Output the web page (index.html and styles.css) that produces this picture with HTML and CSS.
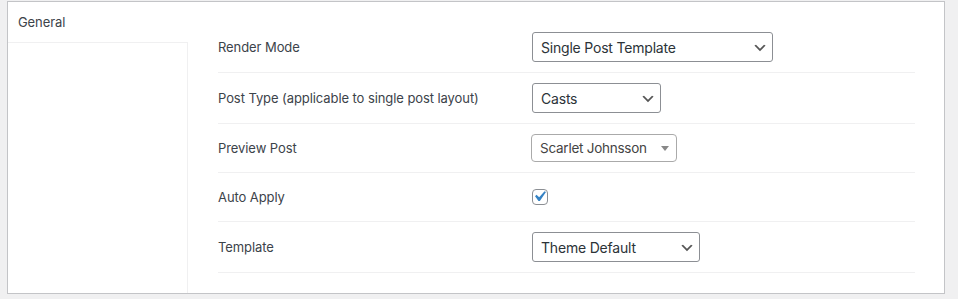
FILE: index.html
```html
<!DOCTYPE html>
<html lang="en">
<head>
    <meta charset="UTF-8">
    <meta name="viewport" content="width=device-width, initial-scale=1.0">
    <title>Template Settings</title>
    <link rel="stylesheet" href="styles.css">
</head>
<body>
    <div class="page">
        <div class="panel">
            <!-- Tabs -->
            <div class="nav">
                <div class="tab">General</div>
                <div class="nav-fill"></div>
            </div>

            <!-- Settings rows -->
            <div class="content">
                <div class="row">
                    <label class="label" for="render-mode">Render Mode</label>
                    <div class="field">
                        <div class="select-wrap w-render">
                            <select id="render-mode" class="select">
                                <option>Single Post Template</option>
                                <option>Archive Template</option>
                            </select>
                            <svg class="chevron" viewBox="0 0 20 20"><path d="M5 6l5 5 5-5 2 1-7 7-7-7 2-1z"/></svg>
                        </div>
                    </div>
                </div>

                <div class="row">
                    <label class="label" for="post-type">Post Type (applicable to single post layout)</label>
                    <div class="field">
                        <div class="select-wrap w-type">
                            <select id="post-type" class="select">
                                <option>Casts</option>
                                <option>Posts</option>
                                <option>Pages</option>
                            </select>
                            <svg class="chevron" viewBox="0 0 20 20"><path d="M5 6l5 5 5-5 2 1-7 7-7-7 2-1z"/></svg>
                        </div>
                    </div>
                </div>

                <div class="row">
                    <div class="label">Preview Post</div>
                    <div class="field">
                        <div class="select2">
                            <span class="select2-text">Scarlet Johnsson</span>
                            <span class="select2-arrow"></span>
                        </div>
                    </div>
                </div>

                <div class="row">
                    <label class="label" for="auto-apply">Auto Apply</label>
                    <div class="field">
                        <span class="checkbox">
                            <svg viewBox="0 0 20 20"><path d="M14.83 4.89l1.34.94-5.81 8.38H9.02L5.78 9.67l1.34-1.25 2.57 2.4z"/></svg>
                        </span>
                    </div>
                </div>

                <div class="row">
                    <label class="label" for="template">Template</label>
                    <div class="field">
                        <div class="select-wrap w-template">
                            <select id="template" class="select">
                                <option>Theme Default</option>
                                <option>Full Width</option>
                            </select>
                            <svg class="chevron" viewBox="0 0 20 20"><path d="M5 6l5 5 5-5 2 1-7 7-7-7 2-1z"/></svg>
                        </div>
                    </div>
                </div>
            </div>
        </div>
    </div>
</body>
</html>
```

FILE: styles.css
```css
/* Base */
body {
    margin: 0;
    background: #f0f0f1;
    font-family: Inter, "Noto Sans", sans-serif;
    color: #3c434a;
}

.page {
    padding: 1px 13px 6px 7px;
}

.panel {
    display: flex;
    background: #fff;
    border: 1px solid #c3c4c7;
    height: 291px;
}

/* Left tab column */
.nav {
    width: 180px;
    display: flex;
    flex-direction: column;
}
.tab {
    height: 40px;
    border-bottom: 1px solid #f0f0f1;
    padding-left: 10px;
    font-size: 13px;
    letter-spacing: -0.08px;
    line-height: 40px;
    color: #3c434a;
}
.nav-fill {
    flex: 1;
    border-right: 1px solid #f0f0f1;
}

/* Settings */
.content {
    flex: 1;
    padding: 20px 29px 20px 30px;
}
.row {
    display: grid;
    grid-template-columns: 314px 1fr;
    align-items: center;
    padding: 10px 0;
    border-bottom: 1px solid #f0f0f1;
}
.label {
    font-size: 13px;
    letter-spacing: -0.08px;
    color: #3c434a;
}
.field {
    min-height: 28px;
    display: flex;
    align-items: center;
}

/* Native selects, WP style */
.select-wrap {
    position: relative;
    height: 30px;
}
.w-render { width: 241px; }
.w-type { width: 129px; }
.w-template { width: 168px; }

.select {
    -webkit-appearance: none;
    appearance: none;
    width: 100%;
    height: 30px;
    margin: 0;
    padding: 0 24px 0 8px;
    border: 1px solid #8c8f94;
    border-radius: 3px;
    background: #fff;
    font-family: inherit;
    font-size: 14px;
    letter-spacing: -0.2px;
    color: #2c3338;
}
.chevron {
    position: absolute;
    right: 5px;
    top: 8px;
    width: 16px;
    height: 16px;
    fill: #555;
    pointer-events: none;
}

/* select2 look */
.select2 {
    position: relative;
    box-sizing: border-box;
    width: 146px;
    height: 28px;
    border: 1px solid #aaa;
    border-radius: 4px;
    margin-left: -1px;
}
.select2-text {
    display: block;
    padding-left: 8px;
    line-height: 26px;
    font-size: 13.5px;
    letter-spacing: -0.25px;
    color: #444;
}
.select2-arrow {
    position: absolute;
    top: 11px;
    right: 7px;
    border-style: solid;
    border-width: 5px 4px 0 4px;
    border-color: #888 transparent transparent transparent;
}

/* Checkbox */
.checkbox {
    box-sizing: border-box;
    width: 16px;
    height: 16px;
    border: 1px solid #8c8f94;
    border-radius: 4px;
    position: relative;
}
.checkbox svg {
    position: absolute;
    left: -4px;
    top: -4px;
    width: 21px;
    height: 21px;
    fill: #3582c4;
}
```
